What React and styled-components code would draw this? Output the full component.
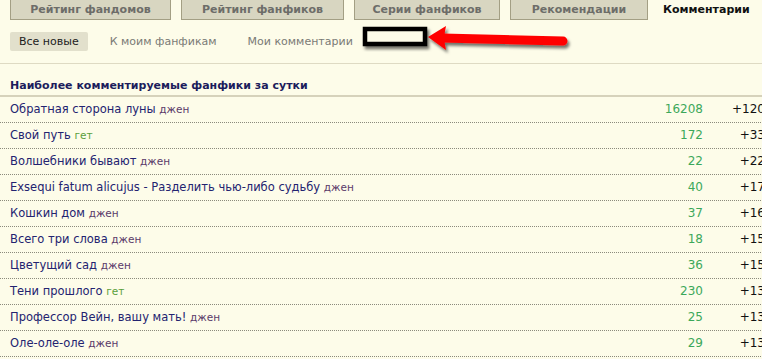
import styled, { createGlobalStyle } from 'styled-components';

const GlobalStyle = createGlobalStyle`
    body {
        margin: 0;
        background: #fdfce9;
        font-family: "DejaVu Sans", Verdana, sans-serif;
        font-size: 11.5px;
        overflow: hidden;
    }
`;

const Page = styled.div`
    position: relative;
    width: 765px;
`;

const TabBar = styled.div`
    display: flex;
    gap: 10px;
    padding-left: 10px;
    margin-top: -6px;
    height: 26px;
`;

const Tab = styled.div`
    box-sizing: border-box;
    height: 26px;
    width: ${props => props.$width}px;
    padding-top: 6px;
    line-height: 18px;
    text-align: center;
    font-size: 11px;
    font-weight: bold;
    color: ${props => (props.$active ? '#111' : '#6d6d69')};
    background: ${props => (props.$active ? 'transparent' : '#d8d6c1')};
    border: 1px solid ${props => (props.$active ? 'transparent' : '#a39f84')};
    ${props => props.$active && 'flex: 1; text-align: left; padding-left: 4px;'}
`;

const SubNav = styled.div`
    display: flex;
    gap: 13px;
    padding: 12px 10px;
    border-bottom: 1px solid #dedac3;
`;

const SubLink = styled.div`
    height: 19px;
    line-height: 19px;
    padding: 0 9px;
    border-radius: 2px;
    font-size: 11px;
    color: ${props => (props.$active ? '#1c1c1c' : '#7a7a76')};
    background: ${props => (props.$active ? '#e2e0cc' : 'transparent')};
`;

const Heading = styled.div`
    padding: 14px 10px 1px;
    line-height: 16px;
    font-size: 11px;
    font-weight: bold;
    color: #1c1c5c;
    border-bottom: 2px solid #d6d2bb;
`;

const Row = styled.div`
    display: grid;
    grid-template-columns: 1fr 80px 62px;
    height: 25px;
    line-height: 25px;
    border-bottom: 1px dotted #8b8a7c;
`;

const Title = styled.div`
    padding-left: 10px;
    color: #232370;
    white-space: nowrap;
`;

const Genre = styled.span`
    font-size: 10.5px;
    color: ${props => (props.$kind === 'гет' ? '#5a9e3c' : '#5a3a6a')};
`;

const Count = styled.div`
    text-align: right;
    font-size: 12px;
    color: #3ca85a;
`;

const Plus = styled.div`
    text-align: right;
    font-size: 12px;
    color: #111;
`;

const Mark = styled.svg`
    position: absolute;
    left: 0;
    top: 0;
    pointer-events: none;
`;

const tabs = [
    { label: 'Рейтинг фандомов', width: 161 },
    { label: 'Рейтинг фанфиков', width: 163 },
    { label: 'Серии фанфиков', width: 146 },
    { label: 'Рекомендации', width: 138 },
    { label: 'Комментарии', active: true },
];

const rows = [
    ['Обратная сторона луны', 'джен', 16208, 120],
    ['Свой путь', 'гет', 172, 33],
    ['Волшебники бывают', 'джен', 22, 22],
    ['Exsequi fatum alicujus - Разделить чью-либо судьбу', 'джен', 40, 17],
    ['Кошкин дом', 'джен', 37, 16],
    ['Всего три слова', 'джен', 18, 15],
    ['Цветущий сад', 'джен', 36, 15],
    ['Тени прошлого', 'гет', 230, 13],
    ['Профессор Вейн, вашу мать!', 'джен', 25, 13],
    ['Оле-оле-оле', 'джен', 29, 13],
];

function Annotation() {
    return (
        <Mark width="762" height="70">
            <defs>
                <filter id="sh" x="-20%" y="-50%" width="140%" height="200%">
                    <feDropShadow dx="2" dy="3" stdDeviation="1.5" floodColor="#000" floodOpacity="0.55" />
                </filter>
            </defs>
            <rect x="365" y="35" width="60" height="15" fill="#fdfce9" stroke="#000" strokeWidth="4.5" filter="url(#sh)" />
            <g filter="url(#sh)" fill="#ff0000">
                <line x1="442" y1="44" x2="563" y2="47" stroke="#ff0000" strokeWidth="9" strokeLinecap="round" />
                <path d="M428 43 L446 32 Q443 44 446 56 Z" />
            </g>
        </Mark>
    );
}

export default function App() {
    return (
        <Page>
            <GlobalStyle />
            <TabBar>
                {tabs.map(t => (
                    <Tab key={t.label} $width={t.width} $active={t.active}>{t.label}</Tab>
                ))}
            </TabBar>
            <SubNav>
                <SubLink $active>Все новые</SubLink>
                <SubLink>К моим фанфикам</SubLink>
                <SubLink>Мои комментарии</SubLink>
            </SubNav>
            <Heading>Наиболее комментируемые фанфики за сутки</Heading>
            {rows.map(([title, genre, count, plus]) => (
                <Row key={title}>
                    <Title>{title} <Genre $kind={genre}>{genre}</Genre></Title>
                    <Count>{count}</Count>
                    <Plus>+{plus}</Plus>
                </Row>
            ))}
            <Annotation />
        </Page>
    );
}
